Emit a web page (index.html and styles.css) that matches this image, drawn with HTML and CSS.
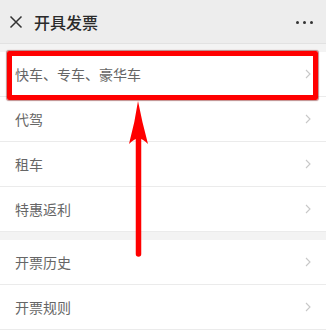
FILE: index.html
```html
<!DOCTYPE html>
<html lang="zh">
<head>
<meta charset="utf-8">
<title>开具发票</title>
<link rel="stylesheet" href="styles.css">
</head>
<body>
<div class="page">
  <header class="topbar">
    <svg class="close" width="14" height="14" viewBox="0 0 14 14"><path d="M1.5 1.5 L12.5 12.5 M12.5 1.5 L1.5 12.5" stroke="#333" stroke-width="1.5" fill="none"/></svg>
    <h1 class="title">开具发票</h1>
    <div class="more"><span></span><span></span><span></span></div>
  </header>
  <div class="gap"></div>
  <ul class="group">
    <li class="row"><span>快车、专车、豪华车</span><svg class="chev" width="6" height="10" viewBox="0 0 6 10"><path d="M1 1 L5 5 L1 9" stroke="#c8c8c8" stroke-width="1.1" fill="none"/></svg></li>
    <li class="row"><span>代驾</span><svg class="chev" width="6" height="10" viewBox="0 0 6 10"><path d="M1 1 L5 5 L1 9" stroke="#c8c8c8" stroke-width="1.1" fill="none"/></svg></li>
    <li class="row"><span>租车</span><svg class="chev" width="6" height="10" viewBox="0 0 6 10"><path d="M1 1 L5 5 L1 9" stroke="#c8c8c8" stroke-width="1.1" fill="none"/></svg></li>
    <li class="row"><span>特惠返利</span><svg class="chev" width="6" height="10" viewBox="0 0 6 10"><path d="M1 1 L5 5 L1 9" stroke="#c8c8c8" stroke-width="1.1" fill="none"/></svg></li>
  </ul>
  <div class="gap"></div>
  <ul class="group">
    <li class="row"><span>开票历史</span><svg class="chev" width="6" height="10" viewBox="0 0 6 10"><path d="M1 1 L5 5 L1 9" stroke="#c8c8c8" stroke-width="1.1" fill="none"/></svg></li>
    <li class="row"><span>开票规则</span><svg class="chev" width="6" height="10" viewBox="0 0 6 10"><path d="M1 1 L5 5 L1 9" stroke="#c8c8c8" stroke-width="1.1" fill="none"/></svg></li>
  </ul>
  <div class="highlight"></div>
  <svg class="arrow" width="326" height="336" viewBox="0 0 326 336">
    <line x1="138.5" y1="136" x2="138.5" y2="254" stroke="#ff0000" stroke-width="5.5" stroke-linecap="round"/>
    <path d="M138 101 Q142 122 148 144 Q143 139 138.5 138 Q134 139 129 144 Q135 122 138 101 Z" fill="#ff0000"/>
  </svg>
</div>
</body>
</html>
```
FILE: styles.css
```css
html, body {
  margin: 0;
  padding: 0;
  background: #ffffff;
}
body {
  font-family: "Noto Sans CJK SC", "Noto Sans", sans-serif;
}
.page {
  position: relative;
  width: 326px;
  height: 336px;
  overflow: hidden;
  background: #ffffff;
}
.topbar {
  display: flex;
  align-items: center;
  height: 43px;
  background: #ededed;
  border-bottom: 1px solid #e2e2e2;
  padding: 0 13px 0 9px;
}
.close {
  display: block;
  flex: none;
}
.title {
  margin: 0 0 0 11px;
  font-size: 16px;
  font-weight: 500;
  color: #2a2a2a;
  line-height: 1;
  flex: 1;
}
.more {
  display: flex;
  gap: 4px;
  align-items: center;
  margin-top: 2px;
}
.more span {
  width: 3px;
  height: 3px;
  border-radius: 50%;
  background: #333;
}
.gap {
  height: 8px;
  background: #f3f3f3;
}
.group {
  list-style: none;
  margin: 0;
  padding: 0;
  background: #fff;
}
.row {
  display: flex;
  align-items: center;
  justify-content: space-between;
  height: 44px;
  border-bottom: 1px solid #ebebeb;
  padding: 0 15px 0 15px;
  font-size: 14px;
  color: #666;
}
.chev {
  display: block;
}
.highlight {
  position: absolute;
  left: 7px;
  top: 51px;
  width: 301px;
  height: 39px;
  border: 5px solid #ff0000;
  border-radius: 2px;
  box-shadow: 0 0 1px 1px rgba(110, 0, 0, 0.45);
}
.arrow {
  position: absolute;
  left: 0;
  top: 0;
}
```
